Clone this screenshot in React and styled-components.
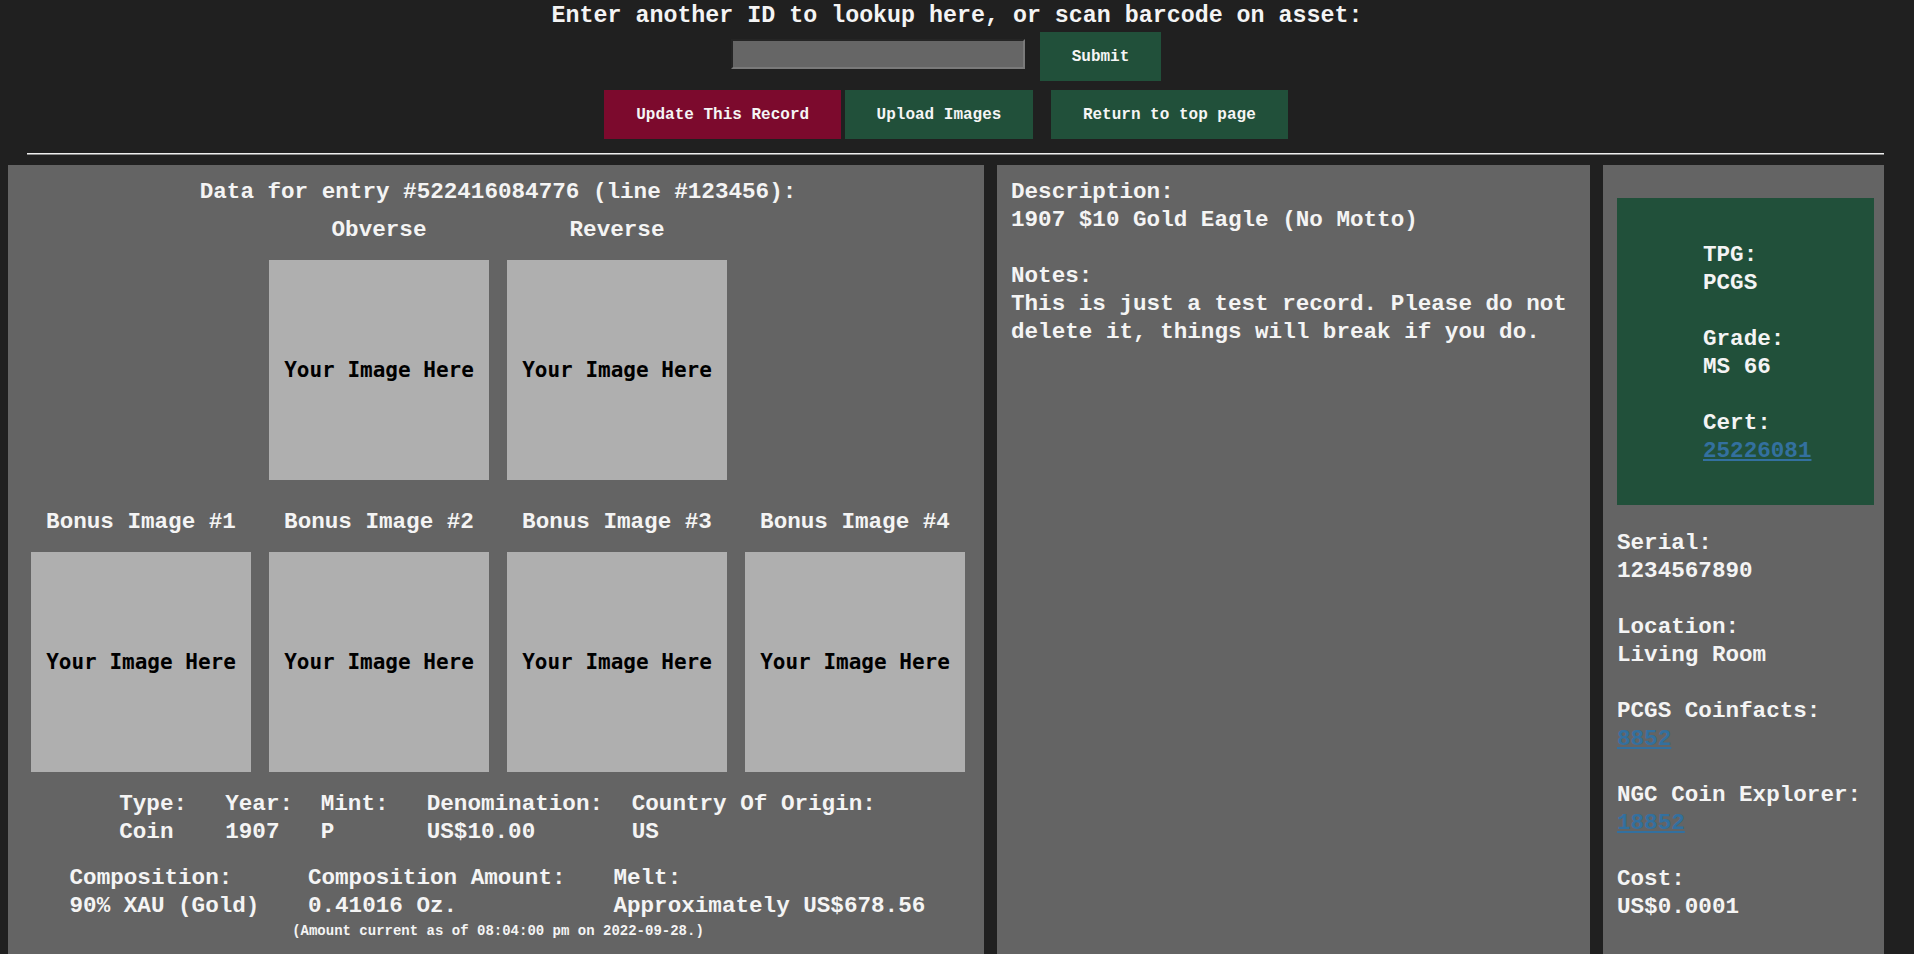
import React from "react";
import styled, { createGlobalStyle } from "styled-components";

const GlobalStyle = createGlobalStyle`
  html, body {
    margin: 0;
    padding: 0;
    background: #202020;
    overflow: hidden;
  }
  body {
    font-family: "Liberation Mono", "DejaVu Sans Mono", monospace;
    font-weight: bold;
    color: #f4f4f4;
  }
`;

const Page = styled.div`
  width: 1914px;
  height: 954px;
  overflow: hidden;
`;

const Prompt = styled.div`
  padding-top: 2px;
  text-align: center;
  font-size: 23.3px;
  line-height: 28px;
`;

const LookupForm = styled.form`
  display: flex;
  justify-content: center;
  align-items: center;
  gap: 15px;
  margin: 2px 0 0;
  padding-right: 22px;
`;

const IdInput = styled.input`
  width: 294px;
  height: 30px;
  box-sizing: border-box;
  margin-bottom: 5px;
  background: #666666;
  border: 2px inset #7a7a7a;
  color: #fff;
  font: bold 16px "Liberation Mono", monospace;
`;

const ButtonRow = styled.div`
  display: flex;
  justify-content: center;
  margin-top: 9px;
  padding-right: 22px;
`;

const ActionButton = styled.button`
  height: 49px;
  padding: 0 32px;
  margin-left: ${(p) => p.$gap || 0}px;
  border: none;
  background: ${(p) => (p.$tone === "danger" ? "#7c0a2d" : "#21503a")};
  color: #f5f5f5;
  font: bold 16px "Liberation Mono", monospace;
  white-space: nowrap;
  cursor: pointer;
`;

const Divider = styled.hr`
  height: 0;
  margin: 14px 30px 0 27px;
  border: none;
  border-top: 1px solid #eeeeee;
  border-bottom: 1px solid #8a8a8a;
`;

const Columns = styled.div`
  display: flex;
  gap: 13px;
  margin: 10px 0 0 8px;
`;

const Panel = styled.section`
  box-sizing: border-box;
  width: ${(p) => p.$w}px;
  min-height: 830px;
  background: #646464;
  font-size: 22.6px;
  line-height: 28px;
`;

const LeftPanel = styled(Panel)`
  padding: 12.5px 0 40px 4px;
`;

const MiddlePanel = styled(Panel)`
  padding: 12.5px 14px 0 14px;
`;

const RightPanel = styled(Panel)`
  padding: 33px 10px 0 14px;
`;

const Title = styled.div`
  text-align: center;
  margin-bottom: 10px;
`;

const ImageRow = styled.div`
  display: flex;
  justify-content: center;
  gap: 18px;
  margin-top: ${(p) => p.$top || 0}px;
`;

const ImageCell = styled.div`
  width: 220px;
  display: flex;
  flex-direction: column;
  align-items: center;
  white-space: nowrap;
`;

const ImageBox = styled.div`
  width: 220px;
  height: 220px;
  margin-top: 16px;
  background: #afafaf;
  display: flex;
  align-items: center;
  justify-content: center;
  color: #000;
  font: bold 21px "DejaVu Sans Mono", monospace;
`;

const SpecGrid = styled.div`
  display: grid;
  grid-template-columns: ${(p) => p.$cols};
  justify-content: center;
  margin-top: ${(p) => p.$top}px;
  white-space: nowrap;
`;

const Footnote = styled.div`
  margin-top: 3px;
  text-align: center;
  font-size: 14px;
  line-height: 17px;
`;

const Field = styled.div`
  & + & {
    margin-top: 28px;
  }
`;

const GradeBox = styled.div`
  background: #21503a;
  padding: 43px 10px 40px 86px;
`;

const InfoList = styled.div`
  margin-top: 24px;
`;

const RefLink = styled.a`
  color: #33709f;
  text-decoration: underline;
`;

const obverse = ["Obverse", "Reverse"];
const bonus = ["Bonus Image #1", "Bonus Image #2", "Bonus Image #3", "Bonus Image #4"];

const specs = [
  ["Type:", "Coin"],
  ["Year:", "1907"],
  ["Mint:", "P"],
  ["Denomination:", "US$10.00"],
  ["Country Of Origin:", "US"],
];

const metal = [
  ["Composition:", "90% XAU (Gold)"],
  ["Composition Amount:", "0.41016 Oz."],
  ["Melt:", "Approximately US$678.56"],
];

const SpecTable = ({ rows, cols, top }) => (
  <SpecGrid $cols={cols} $top={top}>
    {rows.map(([label]) => (
      <div key={label}>{label}</div>
    ))}
    {rows.map(([label, value]) => (
      <div key={label + "v"}>{value}</div>
    ))}
  </SpecGrid>
);

const Images = ({ labels, top }) => (
  <ImageRow $top={top}>
    {labels.map((label) => (
      <ImageCell key={label}>
        {label}
        <ImageBox>Your Image Here</ImageBox>
      </ImageCell>
    ))}
  </ImageRow>
);

const App = () => {
  return (
    <Page>
      <GlobalStyle />
      <Prompt>Enter another ID to lookup here, or scan barcode on asset:</Prompt>
      <LookupForm onSubmit={(e) => e.preventDefault()}>
        <IdInput type="text" />
        <ActionButton type="submit">Submit</ActionButton>
      </LookupForm>
      <ButtonRow>
        <ActionButton $tone="danger">Update This Record</ActionButton>
        <ActionButton $gap={3.5}>Upload Images</ActionButton>
        <ActionButton $gap={17.5}>Return to top page</ActionButton>
      </ButtonRow>
      <Divider />
      <Columns>
        <LeftPanel $w={976}>
          <Title>Data for entry #522416084776 (line #123456):</Title>
          <Images labels={obverse} />
          <Images labels={bonus} top={28} />
          <SpecTable rows={specs} cols="106px 95.5px 106px 205px 245px" top={18.4} />
          <SpecTable rows={metal} cols="238.4px 305.5px 313px" top={18} />
          <Footnote>(Amount current as of 08:04:00 pm on 2022-09-28.)</Footnote>
        </LeftPanel>
        <MiddlePanel $w={593}>
          <Field>
            <div>Description:</div>
            <div>1907 $10 Gold Eagle (No Motto)</div>
          </Field>
          <Field>
            <div>Notes:</div>
            <div>This is just a test record. Please do not delete it, things will break if you do.</div>
          </Field>
        </MiddlePanel>
        <RightPanel $w={281}>
          <GradeBox>
            <Field>
              <div>TPG:</div>
              <div>PCGS</div>
            </Field>
            <Field>
              <div>Grade:</div>
              <div>MS 66</div>
            </Field>
            <Field>
              <div>Cert:</div>
              <RefLink href="#cert">25226081</RefLink>
            </Field>
          </GradeBox>
          <InfoList>
            <Field>
              <div>Serial:</div>
              <div>1234567890</div>
            </Field>
            <Field>
              <div>Location:</div>
              <div>Living Room</div>
            </Field>
            <Field>
              <div>PCGS Coinfacts:</div>
              <RefLink href="#coinfacts">8852</RefLink>
            </Field>
            <Field>
              <div>NGC Coin Explorer:</div>
              <RefLink href="#ngc">18852</RefLink>
            </Field>
            <Field>
              <div>Cost:</div>
              <div>US$0.0001</div>
            </Field>
          </InfoList>
        </RightPanel>
      </Columns>
    </Page>
  );
};

export default App;
